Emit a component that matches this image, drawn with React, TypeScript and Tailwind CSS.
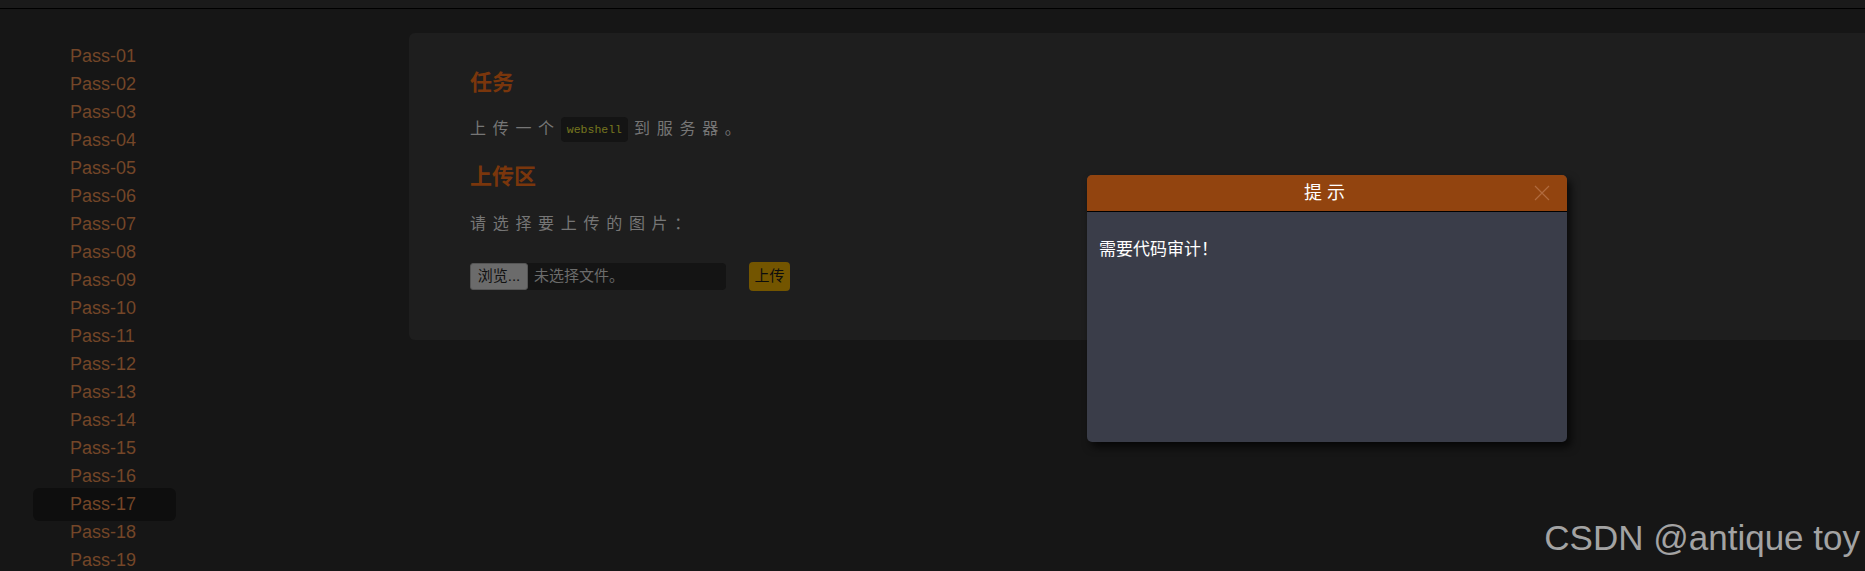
import React from 'react';

const passes = Array.from({ length: 19 }, (_, i) => `Pass-${String(i + 1).padStart(2, '0')}`);

const cjk = "font-['Liberation_Sans','Noto_Sans_CJK_SC',sans-serif]";

export default function App() {
  return (
    <div className={`relative h-[571px] w-[1865px] overflow-hidden bg-[#161616] ${cjk}`}>
      <div className="h-[9px] border-b border-black bg-[#1a1a1a]" />

      <div className="flex">
        {/* sidebar */}
        <nav className="w-[409px] shrink-0 pl-[33px] pt-[33px]">
          <ul>
            {passes.map((p) => (
              <li
                key={p}
                className={`flex h-[28px] w-[143px] items-center rounded-md pl-[37px] text-[18px] text-[#744628] ${
                  p === 'Pass-17' ? 'h-[33px] -my-[2.5px] bg-[#0e0e0e]' : ''
                }`}
              >
                {p}
              </li>
            ))}
          </ul>
        </nav>

        {/* content panel */}
        <main className="mt-[24px] h-[307px] flex-1 rounded-l-md bg-[#1e1e1e] pl-[61px] pt-[36px]">
          <h2 className="text-[22px] font-bold leading-[28px] text-[#7a360c]">任务</h2>
          <p className="mt-[19px] flex items-center text-[16px] leading-[26px] tracking-[6.7px] text-[#767676]">
            <span>上传一个</span>
            <code className="mr-[6px] rounded-[4px] bg-[#141414] px-[6px] font-['Liberation_Mono',monospace] text-[11.5px] leading-[25px] tracking-normal text-[#77771f]">
              webshell
            </code>
            <span>到服务器。</span>
          </p>
          <h2 className="mt-[21px] text-[22px] font-bold leading-[28px] text-[#7a360c]">上传区</h2>
          <p className="mt-[20px] text-[16px] leading-[26px] tracking-[6.7px] text-[#767676]">请选择要上传的图片：</p>
          <div className="mt-[25px] flex items-center">
            <div className="flex h-[27px] w-[256px] items-center rounded-[4px] bg-[#141414]">
              <span className="flex h-[27px] w-[58px] items-center justify-center rounded-[3px] border border-[#555] bg-[#6b6b6b] text-[15px] text-[#111]">
                浏览...
              </span>
              <span className="ml-[6px] text-[15px] text-[#6c6c6c]">未选择文件。</span>
            </div>
            <button className="ml-[23px] h-[29px] w-[41px] rounded-[4px] bg-[#735500] text-[15px] text-[#0d0d0d]">
              上传
            </button>
          </div>
        </main>
      </div>

      {/* dialog */}
      <div className="absolute left-[1087px] top-[175px] flex h-[267px] w-[480px] flex-col overflow-hidden rounded-[5px] bg-[#3a3d49] shadow-[4px_5px_8px_rgba(0,0,0,0.7)]">
        <div className="relative flex h-[37px] items-center justify-center border-b border-black bg-[#92440f]">
          <span className="text-[18px] tracking-[5px] text-white">提示</span>
          <svg
            className="absolute right-[17px] top-[10px]"
            width="16"
            height="16"
            viewBox="0 0 16 16"
            fill="none"
            stroke="#b06a3e"
            strokeWidth="1.2"
          >
            <path d="M1 1L15 15M15 1L1 15" />
          </svg>
        </div>
        <div className="px-[12px] pt-[27px] text-[17px] leading-[22px] text-white">需要代码审计！</div>
      </div>

      <div className="absolute bottom-[13px] right-[5px] text-[35px] leading-[40px] text-[#a3a3a3]">
        CSDN @antique toy
      </div>
    </div>
  );
}
